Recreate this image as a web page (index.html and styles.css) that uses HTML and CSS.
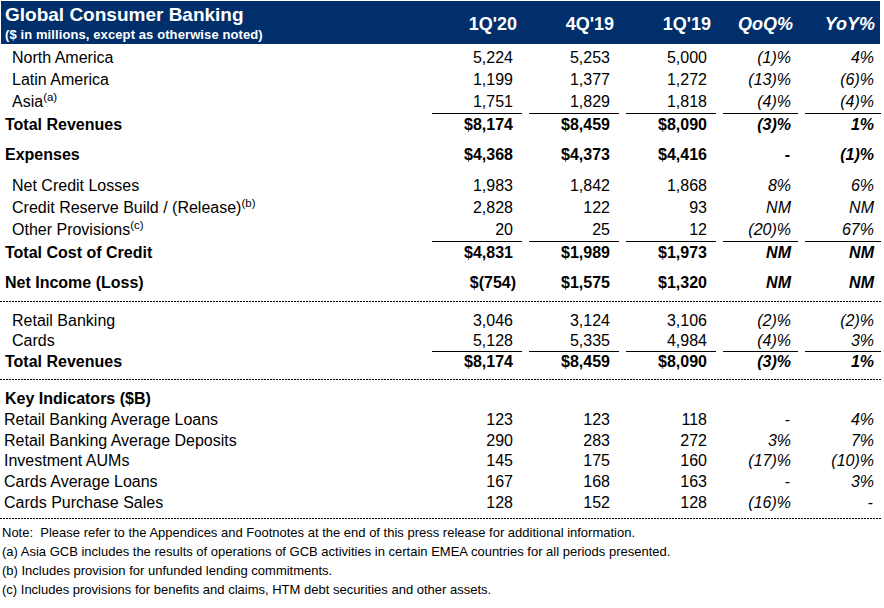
FILE: index.html
```html
<!DOCTYPE html>
<html>
<head>
<meta charset="utf-8">
<link rel="stylesheet" href="styles.css">
</head>
<body>
<div class="page">
  <div class="hdr">
    <div class="hdr-title">
      <div class="t1">Global Consumer Banking</div>
      <div class="t2">($ in millions, except as otherwise noted)</div>
    </div>
    <div class="ch">1Q'20</div>
    <div class="ch">4Q'19</div>
    <div class="ch">1Q'19</div>
    <div class="ch it">QoQ%</div>
    <div class="ch it">YoY%</div>
  </div>

  <div class="row sp3">
    <div class="lbl ind">North America</div>
    <div class="num">5,224</div><div class="num">5,253</div><div class="num">5,000</div>
    <div class="pct">(1)%</div><div class="pct">4%</div>
  </div>
  <div class="row">
    <div class="lbl ind">Latin America</div>
    <div class="num">1,199</div><div class="num">1,377</div><div class="num">1,272</div>
    <div class="pct">(13)%</div><div class="pct">(6)%</div>
  </div>
  <div class="row ul">
    <div class="lbl ind">Asia<sup>(a)</sup></div>
    <div class="num">1,751</div><div class="num">1,829</div><div class="num">1,818</div>
    <div class="pct">(4)%</div><div class="pct">(4)%</div>
  </div>
  <div class="row b">
    <div class="lbl">Total Revenues</div>
    <div class="num">$8,174</div><div class="num">$8,459</div><div class="num">$8,090</div>
    <div class="pct">(3)%</div><div class="pct">1%</div>
  </div>

  <div class="row b sp8">
    <div class="lbl">Expenses</div>
    <div class="num">$4,368</div><div class="num">$4,373</div><div class="num">$4,416</div>
    <div class="pct up">-</div><div class="pct">(1)%</div>
  </div>

  <div class="row sp9">
    <div class="lbl ind">Net Credit Losses</div>
    <div class="num">1,983</div><div class="num">1,842</div><div class="num">1,868</div>
    <div class="pct">8%</div><div class="pct">6%</div>
  </div>
  <div class="row">
    <div class="lbl ind">Credit Reserve Build / (Release)<sup>(b)</sup></div>
    <div class="num">2,828</div><div class="num">122</div><div class="num">93</div>
    <div class="pct">NM</div><div class="pct">NM</div>
  </div>
  <div class="row ul">
    <div class="lbl ind">Other Provisions<sup>(c)</sup></div>
    <div class="num">20</div><div class="num">25</div><div class="num">12</div>
    <div class="pct">(20)%</div><div class="pct">67%</div>
  </div>
  <div class="row b">
    <div class="lbl">Total Cost of Credit</div>
    <div class="num">$4,831</div><div class="num">$1,989</div><div class="num">$1,973</div>
    <div class="pct">NM</div><div class="pct">NM</div>
  </div>

  <div class="row b sp8">
    <div class="lbl">Net Income (Loss)</div>
    <div class="num neg">$(754)</div><div class="num">$1,575</div><div class="num">$1,320</div>
    <div class="pct">NM</div><div class="pct">NM</div>
  </div>

  <div class="dash sp7"></div>

  <div class="row r20 sp9">
    <div class="lbl ind">Retail Banking</div>
    <div class="num">3,046</div><div class="num">3,124</div><div class="num">3,106</div>
    <div class="pct">(2)%</div><div class="pct">(2)%</div>
  </div>
  <div class="row r20 ul">
    <div class="lbl ind">Cards</div>
    <div class="num">5,128</div><div class="num">5,335</div><div class="num">4,984</div>
    <div class="pct">(4)%</div><div class="pct">3%</div>
  </div>
  <div class="row r20 b">
    <div class="lbl">Total Revenues</div>
    <div class="num">$8,174</div><div class="num">$8,459</div><div class="num">$8,090</div>
    <div class="pct">(3)%</div><div class="pct">1%</div>
  </div>

  <div class="dash sp7"></div>

  <div class="row r21 sp9">
    <div class="lbl b">Key Indicators ($B)</div>
    <div></div><div></div><div></div><div></div><div></div>
  </div>
  <div class="row r21">
    <div class="lbl ki">Retail Banking Average Loans</div>
    <div class="num">123</div><div class="num">123</div><div class="num">118</div>
    <div class="pct up">-</div><div class="pct">4%</div>
  </div>
  <div class="row r21">
    <div class="lbl ki">Retail Banking Average Deposits</div>
    <div class="num">290</div><div class="num">283</div><div class="num">272</div>
    <div class="pct">3%</div><div class="pct">7%</div>
  </div>
  <div class="row r21">
    <div class="lbl ki">Investment AUMs</div>
    <div class="num">145</div><div class="num">175</div><div class="num">160</div>
    <div class="pct">(17)%</div><div class="pct">(10)%</div>
  </div>
  <div class="row r21">
    <div class="lbl ki">Cards Average Loans</div>
    <div class="num">167</div><div class="num">168</div><div class="num">163</div>
    <div class="pct up">-</div><div class="pct">3%</div>
  </div>
  <div class="row r21">
    <div class="lbl ki">Cards Purchase Sales</div>
    <div class="num">128</div><div class="num">152</div><div class="num">128</div>
    <div class="pct">(16)%</div><div class="pct up">-</div>
  </div>

  <div class="dash sp4"></div>

  <div class="notes">
    <div>Note:&nbsp; Please refer to the Appendices and Footnotes at the end of this press release for additional information.</div>
    <div>(a) Asia GCB includes the results of operations of GCB activities in certain EMEA countries for all periods presented.</div>
    <div>(b) Includes provision for unfunded lending commitments.</div>
    <div>(c) Includes provisions for benefits and claims, HTM debt securities and other assets.</div>
  </div>
</div>
</body>
</html>
```

FILE: styles.css
```css
* {
  box-sizing: border-box;
}

body {
  margin: 0;
  background: #ffffff;
  color: #000000;
  font-family: "Liberation Sans", Arial, sans-serif;
}

.page {
  width: 884px;
}

.hdr {
  margin: 1px 0 0 1px;
  width: 879px;
  height: 43px;
  background: #002f6c;
  color: #ffffff;
  display: grid;
  grid-template-columns: 424px 90px 90px 90px 75px 75px;
  column-gap: 7px;
}

.hdr-title {
  padding: 4px 0 0 4px;
  white-space: nowrap;
}

.t1 {
  font-size: 19px;
  font-weight: bold;
  line-height: 19px;
}

.t2 {
  font-size: 13px;
  font-weight: bold;
  line-height: 14px;
  margin-top: 4px;
  letter-spacing: 0.1px;
}

.ch {
  font-size: 18px;
  font-weight: bold;
  line-height: 18px;
  padding: 14px 5px 0 0;
  text-align: right;
  white-space: nowrap;
}

.ch.it {
  font-style: italic;
}

.row {
  display: grid;
  grid-template-columns: 425px 90px 90px 90px 75px 76px;
  column-gap: 7px;
  font-size: 16px;
  line-height: 22px;
  white-space: nowrap;
}

.row.r20 {
  line-height: 20px;
}

.row.r21 {
  line-height: 20.75px;
}

.b {
  font-weight: bold;
}

.lbl {
  padding-left: 5px;
}

.lbl.ind {
  padding-left: 12px;
}

.lbl.ki {
  padding-left: 4px;
}

.num {
  text-align: right;
  padding-right: 9px;
}

.num.neg {
  padding-right: 6px;
}

.pct {
  text-align: right;
  padding-right: 7px;
  font-style: italic;
}

.pct.up {
  font-style: normal;
  padding-right: 8px;
}

.ul .num,
.ul .pct {
  border-bottom: 1px solid #000000;
}

sup {
  font-size: 11.5px;
  line-height: 0;
  vertical-align: 6px;
}

.sp3 { margin-top: 3px; }
.sp4 { margin-top: 4px; }
.sp7 { margin-top: 7px; }
.sp8 { margin-top: 8px; }
.sp9 { margin-top: 9px; }

.dash {
  height: 1px;
  width: 882px;
  background: repeating-linear-gradient(to right, #000000 0 2px, transparent 2px 3px);
}

.notes {
  margin-top: 4px;
  padding-left: 2px;
  font-size: 13px;
  line-height: 19px;
  white-space: nowrap;
}
```
